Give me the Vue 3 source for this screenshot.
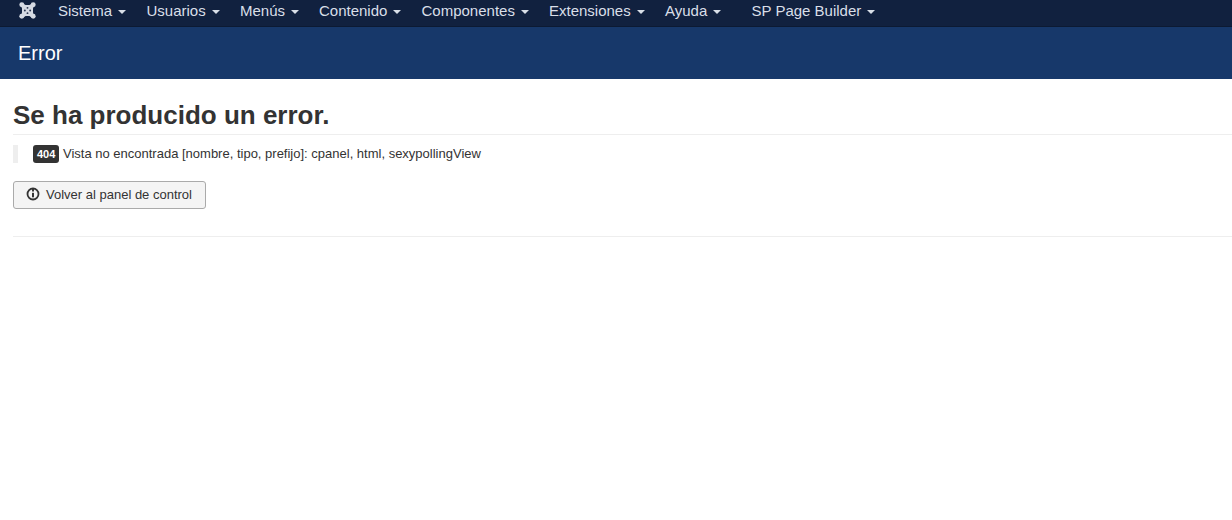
<script setup>
const menus = [
  { label: 'Sistema', w: 88.5 },
  { label: 'Usuarios', w: 93.5 },
  { label: 'Menús', w: 79 },
  { label: 'Contenido', w: 102.5 },
  { label: 'Componentes', w: 127.5 },
  { label: 'Extensiones', w: 116 },
  { label: 'Ayuda', w: 86.5 },
  { label: 'SP Page Builder', w: 140 }
]
</script>

<template>
  <div class="page">
    <nav class="navbar">
      <svg class="logo" viewBox="0 0 20 20" width="19" height="19" aria-hidden="true">
        <path d="M3 3.500L5 2.500l3 1.800h4l3-1.800 2 1L15.800 8v4l1.200 4.500-2 1-3-1.800H8l-3 1.800-2-1L4.200 12V8z" fill="#d5dae3"/>
        <circle cx="4" cy="4" r="2.600" fill="#d5dae3"/>
        <circle cx="16" cy="4" r="2.600" fill="#d5dae3"/>
        <circle cx="4" cy="16" r="2.600" fill="#d5dae3"/>
        <circle cx="16" cy="16" r="2.600" fill="#d5dae3"/>
        <circle cx="10" cy="7.200" r="1" fill="#2a3550"/>
        <circle cx="7.200" cy="10" r="1" fill="#2a3550"/>
        <circle cx="12.800" cy="10" r="1" fill="#2a3550"/>
        <circle cx="10" cy="12.800" r="1" fill="#2a3550"/>
      </svg>
      <ul class="menu">
        <li v-for="m in menus" :key="m.label" :style="{ width: m.w + 'px' }">
          {{ m.label }}<span class="caret"></span>
        </li>
      </ul>
    </nav>
    <header class="subhead"><h1>Error</h1></header>
    <main class="content">
      <h2>Se ha producido un error.</h2>
      <blockquote>
        <span class="badge">404</span> Vista no encontrada [nombre, tipo, prefijo]: cpanel, html, sexypollingView
      </blockquote>
      <button class="btn" type="button">
        <svg viewBox="0 0 14 14" width="14" height="14" aria-hidden="true">
          <circle cx="7" cy="7" r="5.500" fill="none" stroke="#333" stroke-width="1.800"/>
          <rect x="6" y="5.800" width="2" height="4.500" fill="#333"/>
          <rect x="6" y="1.500" width="2" height="3" fill="#333"/>
        </svg>
        Volver al panel de control
      </button>
      <hr />
    </main>
  </div>
</template>

<style scoped>
.page {
  width: 1232px;
  height: 520px;
  overflow: hidden;
  background: #fff;
  font-family: "Liberation Sans", Arial, sans-serif;
  color: #333;
}
.navbar {
  display: flex;
  align-items: center;
  height: 26px;
  padding-left: 18px;
  background: #11213f;
  border-bottom: 1px solid #0c1a33;
}
.logo { flex: none; margin-top: -6px; }
.menu {
  display: flex;
  list-style: none;
  margin: -5px 0 0 21px;
  padding: 0;
  color: #d9dfe8;
  font-size: 15px;
  line-height: 20px;
}
.menu li { white-space: nowrap; flex: none; }
.caret {
  display: inline-block;
  margin-left: 6px;
  vertical-align: middle;
  border-top: 4px solid #d9dfe8;
  border-left: 4px solid transparent;
  border-right: 4px solid transparent;
}
.subhead {
  display: flex;
  align-items: center;
  height: 52px;
  padding-left: 18px;
  background: #17386a;
}
.subhead h1 {
  margin: 0;
  color: #fff;
  font-size: 20px;
  font-weight: 400;
  line-height: 24px;
}
.content { padding: 20px 0 0 13px; }
h2 {
  margin: 0;
  padding-bottom: 3px;
  border-bottom: 1px solid #eee;
  font-size: 26px;
  line-height: 32px;
  font-weight: 700;
}
blockquote {
  margin: 10px 0 0;
  padding-left: 15px;
  border-left: 5px solid #eee;
  font-size: 13px;
  line-height: 18px;
}
.badge {
  display: inline-block;
  padding: 0 4px;
  border-radius: 3px;
  background: #333;
  color: #fff;
  font-size: 11px;
  font-weight: 700;
  line-height: 18px;
}
.btn {
  display: flex;
  align-items: center;
  gap: 6px;
  width: 193px;
  height: 28px;
  margin-top: 18px;
  padding: 0 12px 2px;
  border: 1px solid #aaa;
  border-radius: 3px;
  background: #f4f4f4;
  color: #333;
  font: 13px "Liberation Sans", Arial, sans-serif;
}
hr {
  height: 1px;
  margin: 27px 0 0;
  border: 0;
  background: #eee;
}
</style>
